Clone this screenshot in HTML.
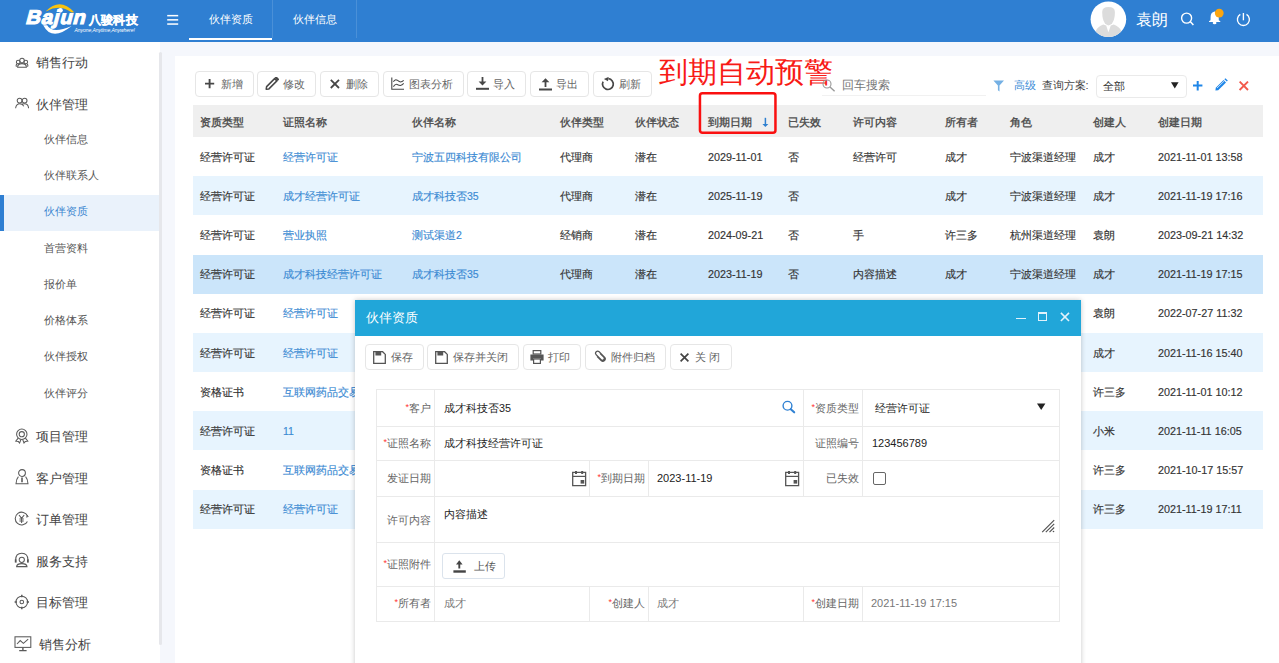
<!DOCTYPE html><html><head><meta charset="utf-8"><style>
*{margin:0;padding:0;box-sizing:border-box}
html,body{width:1279px;height:663px;overflow:hidden;background:#f5f7fc;font-family:"Liberation Sans",sans-serif;color:#333}
.a{position:absolute;white-space:nowrap}
#hdr{position:absolute;left:0;top:0;width:1279px;height:42px;background:#2f7fd2}
#side{position:absolute;left:0;top:42px;width:160px;height:621px;background:#fff}
#sb{position:absolute;left:158.5px;top:52px;width:3.5px;height:593px;background:#e6e7eb;border-radius:2px}
#panel{position:absolute;left:175px;top:56px;width:1104px;height:607px;background:#fff}
.btn{position:absolute;top:71px;height:26px;border:1px solid #e6e6e6;border-radius:4px;background:#fff;font-size:11px;color:#555}
.btn span{position:absolute;top:0;line-height:24px}
.btn svg{position:absolute}
.th{position:absolute;left:193px;top:105px;width:1070px;height:32px;background:#efefef}
.thc{position:absolute;top:1px;line-height:32px;font-size:10.5px;font-weight:bold;color:#555;white-space:nowrap}
.row{position:absolute;left:193px;width:1070px;height:39px}
.row.s{background:#e7f4fe}
.row.sel{background:#cbe5fa}
.c{position:absolute;top:0.5px;line-height:39px;font-size:10.5px;color:#333;white-space:nowrap;-webkit-text-stroke:0.15px currentColor}
.l{color:#3b8ad3}
.nav1{position:absolute;left:36px;font-size:13px;color:#444;line-height:20px;white-space:nowrap}
.nav2{position:absolute;left:43.5px;font-size:11px;color:#555;line-height:20px;white-space:nowrap}
.ico{position:absolute}
</style></head><body>
<div id="hdr"></div>
<svg class="ico" style="left:167px;top:14px" width="12" height="12" viewBox="0 0 12 12"><rect x="0.2" y="0.9" width="11" height="1.5" fill="#fff"/><rect x="0.2" y="5.1" width="11" height="1.5" fill="#fff"/><rect x="0.2" y="9.3" width="11" height="1.5" fill="#fff"/></svg>
<svg class="ico" style="left:24px;top:0" width="120" height="40" viewBox="0 0 120 40"><path d="M21.8 11.2Q36 -3.3 50.2 12.2L47.6 12.6Q36 3.85 22.4 11.3Z" fill="#f9c20f"/><path d="M19.2 25.2Q28 42 47.6 26.1Q28 34.3 23.2 25.2Z" fill="#fff"/><circle cx="36.4" cy="10.3" r="2.4" fill="#fff"/></svg>
<div class="a" style="left:25px;top:4px;font-size:20px;font-weight:bold;color:#fff;line-height:26px;-webkit-text-stroke:1.1px #fff;letter-spacing:0.7px;transform:skewX(-15deg) scaleX(1.02);transform-origin:0 20px">Bajun</div>
<div class="a" style="left:88.5px;top:10.5px;font-size:11.6px;font-weight:bold;color:#fff;line-height:18px;letter-spacing:0.4px;-webkit-text-stroke:0.3px #fff">八骏科技</div>
<div class="a" style="left:74.5px;top:27px;font-size:5px;color:#fff;line-height:6px;font-style:italic;letter-spacing:-0.05px">Anyone,Anytime,Anywhere!</div>
<svg class="ico" style="left:1090px;top:1px" width="37" height="37" viewBox="0 0 37 37"><defs><clipPath id="cc"><circle cx="18.4" cy="18.2" r="17.8"/></clipPath></defs><circle cx="18.4" cy="18.2" r="17.8" fill="#fff"/><g clip-path="url(#cc)" fill="#dcdcdc"><path d="M12.2 11Q12.2 5.9 18.5 5.9Q24.9 5.9 24.9 11Q24.9 18.5 22 22.6Q20.2 24.4 18.5 24.4Q16.8 24.4 15 22.6Q12.2 18.5 12.2 11Z"/><path d="M13.2 23.6L16.2 24.4L18.4 31.2L20.8 24.4L23.8 23.6Q29.5 26.2 31 29.5V37H6V29.5Q7.5 26.2 13.2 23.6Z"/></g></svg>
<div class="a" style="left:1136px;top:8px;font-size:16.3px;color:#fff;line-height:22px">袁朗</div>
<svg class="ico" style="left:1179px;top:11px" width="16" height="16" viewBox="0 0 16 16"><circle cx="7.6" cy="7.1" r="5" fill="none" stroke="#fff" stroke-width="1.4"/><path d="M11.2 10.6L14.4 14" stroke="#fff" stroke-width="1.5"/></svg>
<svg class="ico" style="left:1207px;top:8px" width="18" height="18" viewBox="0 0 18 18"><path d="M7.5 3.4Q3.6 4.2 3.6 9L3.5 12.3L2 13.2V14H13.3V13.2L11.8 12.3L11.7 9Q11.7 4.2 7.6 3.4Z" fill="#fff"/><ellipse cx="7.6" cy="15" rx="1.9" ry="1.2" fill="#fff"/><circle cx="12.25" cy="5.1" r="4.4" fill="#fba50e"/></svg>
<svg class="ico" style="left:1235px;top:11px" width="17" height="17" viewBox="0 0 17 17"><path d="M5.3 3.4A6 6 0 1 0 11.5 3.4" fill="none" stroke="#fff" stroke-width="1.35"/><path d="M8.4 2V9.3" stroke="#fff" stroke-width="1.35"/></svg>
<div class="a" style="left:208.5px;top:10.3px;font-size:10.6px;color:#fff;line-height:19px">伙伴资质</div>
<div class="a" style="left:188.5px;top:38.4px;width:83.5px;height:2px;background:#fff"></div>
<div class="a" style="left:272px;top:0;width:1px;height:38px;background:#4a90d8"></div>
<div class="a" style="left:292.5px;top:10.3px;font-size:10.6px;color:#fff;line-height:19px">伙伴信息</div>
<div class="a" style="left:356px;top:0;width:1px;height:38px;background:#4a90d8"></div>
<div id="side"></div><div id="sb"></div>
<div class="nav1" style="top:53px">销售行动</div>
<div class="nav1" style="top:95px">伙伴管理</div>
<div class="nav2" style="top:128.6px">伙伴信息</div>
<div class="nav2" style="top:164.9px">伙伴联系人</div>
<div class="a" style="left:0;top:195px;width:159px;height:36px;background:#eaf2fb"></div>
<div class="a" style="left:0;top:195px;width:4px;height:36px;background:#2f7fd2"></div>
<div class="nav2" style="top:201.2px;color:#3b86d0">伙伴资质</div>
<div class="nav2" style="top:237.5px">首营资料</div>
<div class="nav2" style="top:273.8px">报价单</div>
<div class="nav2" style="top:310.1px">价格体系</div>
<div class="nav2" style="top:346.4px">伙伴授权</div>
<div class="nav2" style="top:382.7px">伙伴评分</div>
<div class="nav1" style="top:427.3px;left:36px">项目管理</div>
<div class="nav1" style="top:468.5px;left:36px">客户管理</div>
<div class="nav1" style="top:510px;left:36px">订单管理</div>
<div class="nav1" style="top:551.7px;left:36px">服务支持</div>
<div class="nav1" style="top:593.3px;left:36px">目标管理</div>
<div class="nav1" style="top:635px;left:38.5px">销售分析</div>
<svg class="ico" style="left:15px;top:57px" width="14" height="12" viewBox="0 0 14 12" fill="none" stroke="#5a5a5a" stroke-width="1.05"><circle cx="7" cy="3.6" r="2.3"/><circle cx="3.2" cy="5" r="1.8"/><circle cx="10.8" cy="5" r="1.8"/><path d="M2.6 10.2Q2.6 6.6 7 6.6Q11.4 6.6 11.4 10.2Z"/><path d="M1.5 9.8Q0.6 8.2 1.9 7M12.5 9.8Q13.4 8.2 12.1 7"/></svg>
<svg class="ico" style="left:15px;top:97px" width="14" height="12" viewBox="0 0 14 12" fill="none" stroke="#5a5a5a" stroke-width="1.05"><circle cx="4.6" cy="3.6" r="2.4"/><circle cx="9.6" cy="3.6" r="2.4"/><path d="M0.6 11.2Q1.2 6.8 5 6.8Q7.4 6.8 8.8 9.2M5.4 7.2Q6.6 6.8 9.6 6.8Q13.2 6.8 13.6 11.2"/></svg>
<svg class="ico" style="left:14px;top:428px" width="16" height="16" viewBox="0 0 16 16" fill="none" stroke="#5a5a5a" stroke-width="1.05"><circle cx="7.8" cy="6.2" r="5.2"/><circle cx="7.8" cy="6.2" r="2.6"/><path d="M4.2 10.2L1.8 13.2L4.4 13.6L5.6 15L7 11.4M11.4 10.2L13.8 13.2L11.2 13.6L10 15L8.6 11.4"/></svg>
<svg class="ico" style="left:14px;top:468px" width="16" height="17" viewBox="0 0 16 17" fill="none" stroke="#5a5a5a" stroke-width="1.05"><circle cx="8" cy="5" r="3.4"/><path d="M4.4 8.6Q2.2 11 2 15.8H14Q13.8 11 11.6 8.6"/><path d="M8 9.6V14.2" stroke-width="1.6"/></svg>
<svg class="ico" style="left:14px;top:511px" width="16" height="15" viewBox="0 0 16 15" fill="none" stroke="#5a5a5a" stroke-width="1.05"><path d="M13.6 5.2A6.4 6.4 0 1 0 13.4 10.4"/><path d="M12.6 3.6L14.2 5.6L12 6" stroke-width="1"/><path d="M5 4L7.6 7.4L10.2 4M7.6 7.4V12M5.4 8H9.8M5.4 10H9.8"/></svg>
<svg class="ico" style="left:14px;top:552px" width="16" height="16" viewBox="0 0 16 16" fill="none" stroke="#5a5a5a" stroke-width="1.05"><path d="M1.6 8.2Q1.6 1.2 7.8 1.2Q14 1.2 14 8.2"/><rect x="0.8" y="7.4" width="1.8" height="3.2" fill="#555" stroke="none"/><rect x="13" y="7.4" width="1.8" height="3.2" fill="#555" stroke="none"/><circle cx="7.8" cy="7.8" r="2.6"/><path d="M2.6 14.6Q2.8 11.6 7.8 11.6Q12.8 11.6 13 14.6Z"/></svg>
<svg class="ico" style="left:14px;top:594px" width="16" height="16" viewBox="0 0 16 16" fill="none" stroke="#5a5a5a" stroke-width="1.05"><circle cx="7.8" cy="8" r="5.8"/><circle cx="7.8" cy="8" r="1.8"/><path d="M7.8 0.8V3.2M7.8 12.8V15.2M0.6 8H3M12.6 8H15" stroke-width="1.5"/></svg>
<svg class="ico" style="left:14px;top:636px" width="18" height="16" viewBox="0 0 18 16" fill="none" stroke="#5a5a5a" stroke-width="1.05"><rect x="1" y="0.8" width="15.8" height="10.6"/><path d="M3 8L6.2 4.6L9.4 7.4L14.2 3.2"/><path d="M8.9 11.4V14.4M5.2 14.6H12.6" stroke-width="1.4"/></svg>
<div id="panel"></div>
<div class="btn" style="left:195px;width:59px"></div>
<div class="btn" style="left:257px;width:59px"></div>
<div class="btn" style="left:320px;width:59px"></div>
<div class="btn" style="left:383px;width:81px"></div>
<div class="btn" style="left:467px;width:59px"></div>
<div class="btn" style="left:530px;width:59px"></div>
<div class="btn" style="left:593px;width:59px"></div>
<svg class="ico" style="left:205px;top:79px" width="10" height="10" viewBox="0 0 10 10"><path d="M0 4.6H9.2M4.6 0V9.2" stroke="#474747" stroke-width="1.9"/></svg>
<svg class="ico" style="left:265px;top:77px" width="14" height="13" viewBox="0 0 14 13"><path d="M1.2 12.2L1.6 9.6L9.6 1.6L11.9 3.9L3.9 11.9Z" fill="none" stroke="#474747" stroke-width="1.5" stroke-linejoin="round"/><path d="M10.4 0.8L11.2 0L13.5 2.3L12.7 3.1Z" fill="#474747" stroke="#474747" stroke-width="1.2"/></svg>
<svg class="ico" style="left:330px;top:79px" width="10" height="10" viewBox="0 0 10 10"><path d="M0.8 0.8L9 9M9 0.8L0.8 9" stroke="#474747" stroke-width="1.8"/></svg>
<svg class="ico" style="left:391px;top:77px" width="14" height="14" viewBox="0 0 14 14"><path d="M0.8 0.5V12.3H13" fill="none" stroke="#474747" stroke-width="1.1"/><path d="M2.4 4.8Q4.2 1.8 6.2 3.2Q8 4.6 9.4 4.9Q11.2 4.8 12.7 3.4M2.4 9.6Q4.2 6.8 6.2 7.4Q8 8.2 9.4 8.4Q11.2 8.2 12.7 6.4" fill="none" stroke="#474747" stroke-width="1.05"/></svg>
<svg class="ico" style="left:476px;top:77px" width="13" height="13" viewBox="0 0 13 13"><path d="M6.5 0V7" stroke="#474747" stroke-width="1.8"/><path d="M2.6 4.6L6.5 8.4L10.4 4.6Z" fill="#474747"/><rect x="0" y="10.8" width="13" height="2" fill="#474747"/></svg>
<svg class="ico" style="left:538.5px;top:77.5px" width="13" height="13" viewBox="0 0 13 13"><path d="M6.5 3V9" stroke="#474747" stroke-width="1.8"/><path d="M2.6 4.2L6.5 0.2L10.4 4.2Z" fill="#474747"/><rect x="0" y="10.5" width="13" height="2" fill="#474747"/></svg>
<svg class="ico" style="left:600.5px;top:77px" width="14" height="14" viewBox="0 0 14 14"><path d="M2.1 4.6A5.4 5.4 0 1 0 7.4 1.7" fill="none" stroke="#474747" stroke-width="1.7"/><path d="M2.9 1.9L7.6 -0.1L7 4.3Z" fill="#474747"/></svg>
<div class="a" style="left:220.5px;color:#666;font-size:10.8px;line-height:20px;top:74px">新增</div>
<div class="a" style="left:283px;color:#666;font-size:10.8px;line-height:20px;top:74px">修改</div>
<div class="a" style="left:346px;color:#666;font-size:10.8px;line-height:20px;top:74px">删除</div>
<div class="a" style="left:409px;color:#666;font-size:10.8px;line-height:20px;top:74px">图表分析</div>
<div class="a" style="left:493px;color:#666;font-size:10.8px;line-height:20px;top:74px">导入</div>
<div class="a" style="left:556px;color:#666;font-size:10.8px;line-height:20px;top:74px">导出</div>
<div class="a" style="left:618.5px;color:#666;font-size:10.8px;line-height:20px;top:74px">刷新</div>
<div class="a" style="left:659px;top:53.5px;font-size:29.3px;color:#f81a16;line-height:36px">到期自动预警</div>
<svg class="ico" style="left:822px;top:79px" width="14" height="13" viewBox="0 0 14 13" fill="none" stroke="#999" stroke-width="1.1"><circle cx="5" cy="5" r="4"/><path d="M8 8L12.6 12.2" stroke-width="1.4"/></svg>
<div class="a" style="left:841.5px;top:75px;font-size:12px;color:#777;line-height:20px">回车搜索</div>
<div class="a" style="left:822px;top:95px;width:164px;height:1px;background:#f1f1f1"></div>
<svg class="ico" style="left:993px;top:79.5px" width="13" height="13" viewBox="0 0 13 13"><path d="M0.4 0.4H11L6.5 5.6V11.4L4.9 10.2V5.6Z" fill="#74b0e4"/></svg>
<div class="a" style="left:1014px;top:75px;font-size:11px;color:#3a8ad6;line-height:20px">高级</div>
<div class="a" style="left:1041.5px;top:75px;font-size:11px;color:#444;line-height:20px">查询方案:</div>
<div class="a" style="left:1096px;top:75px;width:91px;height:23px;border:1px solid #eaeaea;border-radius:4px;background:#fff"></div>
<div class="a" style="left:1102.5px;top:76px;font-size:11px;color:#333;line-height:20px">全部</div>
<svg class="ico" style="left:1171px;top:82px" width="8" height="7" viewBox="0 0 8 7"><path d="M0 0.3H7.6L3.8 6.5Z" fill="#222"/></svg>
<svg class="ico" style="left:1193px;top:81px" width="10" height="10" viewBox="0 0 10 10"><path d="M0 4.6H9.4M4.7 0V9.4" stroke="#1f86e8" stroke-width="2"/></svg>
<svg class="ico" style="left:1213.5px;top:78px" width="14" height="14" viewBox="0 0 14 14"><path d="M1.4 12.6L1.8 9.8L9.6 2L12 4.4L4.2 12.2Z" fill="#1f86e8"/><path d="M3 10L10.4 2.8" stroke="#fff" stroke-width="0.7"/><path d="M10.4 1.2L11.4 0.2L13.8 2.6L12.8 3.6Z" fill="#1f86e8"/></svg>
<svg class="ico" style="left:1238.5px;top:81px" width="10" height="10" viewBox="0 0 10 10"><path d="M0.6 0.6L9 9M9 0.6L0.6 9" stroke="#f25a4c" stroke-width="1.9"/></svg>
<div class="th">
<div class="thc" style="left:6.5px">资质类型</div>
<div class="thc" style="left:90px">证照名称</div>
<div class="thc" style="left:219px">伙伴名称</div>
<div class="thc" style="left:367px">伙伴类型</div>
<div class="thc" style="left:441.5px">伙伴状态</div>
<div class="thc" style="left:515px">到期日期</div>
<div class="thc" style="left:595px">已失效</div>
<div class="thc" style="left:659.5px">许可内容</div>
<div class="thc" style="left:752px">所有者</div>
<div class="thc" style="left:816.5px">角色</div>
<div class="thc" style="left:900px">创建人</div>
<div class="thc" style="left:965px">创建日期</div>
</div>
<div class="row" style="top:137.0px">
<div class="c" style="left:6.5px">经营许可证</div>
<div class="c l" style="left:90px">经营许可证</div>
<div class="c l" style="left:219px">宁波五四科技有限公司</div>
<div class="c" style="left:367px">代理商</div>
<div class="c" style="left:441.5px">潜在</div>
<div class="c" style="left:515px;font-size:10.8px">2029-11-01</div>
<div class="c" style="left:595px">否</div>
<div class="c" style="left:659.5px">经营许可</div>
<div class="c" style="left:752px">成才</div>
<div class="c" style="left:816.5px">宁波渠道经理</div>
<div class="c" style="left:900px">成才</div>
<div class="c" style="left:965px;font-size:10.8px">2021-11-01 13:58</div>
</div>
<div class="row s" style="top:176.2px">
<div class="c" style="left:6.5px">经营许可证</div>
<div class="c l" style="left:90px">成才经营许可证</div>
<div class="c l" style="left:219px">成才科技否35</div>
<div class="c" style="left:367px">代理商</div>
<div class="c" style="left:441.5px">潜在</div>
<div class="c" style="left:515px;font-size:10.8px">2025-11-19</div>
<div class="c" style="left:595px">否</div>
<div class="c" style="left:752px">成才</div>
<div class="c" style="left:816.5px">宁波渠道经理</div>
<div class="c" style="left:900px">成才</div>
<div class="c" style="left:965px;font-size:10.8px">2021-11-19 17:16</div>
</div>
<div class="row" style="top:215.4px">
<div class="c" style="left:6.5px">经营许可证</div>
<div class="c l" style="left:90px">营业执照</div>
<div class="c l" style="left:219px">测试渠道2</div>
<div class="c" style="left:367px">经销商</div>
<div class="c" style="left:441.5px">潜在</div>
<div class="c" style="left:515px;font-size:10.8px">2024-09-21</div>
<div class="c" style="left:595px">否</div>
<div class="c" style="left:659.5px">手</div>
<div class="c" style="left:752px">许三多</div>
<div class="c" style="left:816.5px">杭州渠道经理</div>
<div class="c" style="left:900px">袁朗</div>
<div class="c" style="left:965px;font-size:10.8px">2023-09-21 14:32</div>
</div>
<div class="row sel" style="top:254.6px">
<div class="c" style="left:6.5px">经营许可证</div>
<div class="c l" style="left:90px">成才科技经营许可证</div>
<div class="c l" style="left:219px">成才科技否35</div>
<div class="c" style="left:367px">代理商</div>
<div class="c" style="left:441.5px">潜在</div>
<div class="c" style="left:515px;font-size:10.8px">2023-11-19</div>
<div class="c" style="left:595px">否</div>
<div class="c" style="left:659.5px">内容描述</div>
<div class="c" style="left:752px">成才</div>
<div class="c" style="left:816.5px">宁波渠道经理</div>
<div class="c" style="left:900px">成才</div>
<div class="c" style="left:965px;font-size:10.8px">2021-11-19 17:15</div>
</div>
<div class="row" style="top:293.8px">
<div class="c" style="left:6.5px">经营许可证</div>
<div class="c l" style="left:90px">经营许可证</div>
<div class="c" style="left:900px">袁朗</div>
<div class="c" style="left:965px;font-size:10.8px">2022-07-27 11:32</div>
</div>
<div class="row s" style="top:333.0px">
<div class="c" style="left:6.5px">经营许可证</div>
<div class="c l" style="left:90px">经营许可证</div>
<div class="c" style="left:900px">成才</div>
<div class="c" style="left:965px;font-size:10.8px">2021-11-16 15:40</div>
</div>
<div class="row" style="top:372.2px">
<div class="c" style="left:6.5px">资格证书</div>
<div class="c l" style="left:90px">互联网药品交易服务</div>
<div class="c" style="left:900px">许三多</div>
<div class="c" style="left:965px;font-size:10.8px">2021-11-01 10:12</div>
</div>
<div class="row s" style="top:411.4px">
<div class="c" style="left:6.5px">经营许可证</div>
<div class="c l" style="left:90px">11</div>
<div class="c" style="left:900px">小米</div>
<div class="c" style="left:965px;font-size:10.8px">2021-11-11 16:05</div>
</div>
<div class="row" style="top:450.6px">
<div class="c" style="left:6.5px">资格证书</div>
<div class="c l" style="left:90px">互联网药品交易服务</div>
<div class="c" style="left:900px">许三多</div>
<div class="c" style="left:965px;font-size:10.8px">2021-10-17 15:57</div>
</div>
<div class="row s" style="top:489.8px">
<div class="c" style="left:6.5px">经营许可证</div>
<div class="c l" style="left:90px">经营许可证</div>
<div class="c" style="left:900px">许三多</div>
<div class="c" style="left:965px;font-size:10.8px">2021-11-19 17:11</div>
</div>
<svg class="ico" style="left:761.5px;top:117px" width="7" height="10" viewBox="0 0 7 10"><path d="M3.4 0.8V7" stroke="#2f80d0" stroke-width="1.5"/><path d="M0.4 7H6.4L3.4 10Z" fill="#2f80d0"/></svg>
<svg class="ico" style="left:697px;top:90px" width="81" height="46" viewBox="0 0 81 46"><rect x="2.95" y="3.25" width="75.5" height="39.5" rx="2.5" fill="none" stroke="#fa1010" stroke-width="2.5"/></svg>
<div class="a" style="left:355px;top:300px;width:726px;height:370px;background:#fff;box-shadow:0 0 5px rgba(0,0,0,0.22)"></div>
<div class="a" style="left:355px;top:300px;width:726px;height:36px;background:#21a6d9"></div>
<div class="a" style="left:366px;top:308px;font-size:13px;color:#fff;line-height:20px">伙伴资质</div>
<div class="a" style="left:1016px;top:317.5px;width:9.5px;height:1.8px;background:#e2f2fb"></div>
<div class="a" style="left:1038px;top:312.2px;width:9px;height:9px;border:1.3px solid #e2f2fb;border-top-width:2.6px"></div>
<svg class="ico" style="left:1059.5px;top:312px" width="10" height="10" viewBox="0 0 10 10"><path d="M0.9 0.9L9 9M9 0.9L0.9 9" stroke="#e2f2fb" stroke-width="1.6"/></svg>
<div class="btn" style="left:364.5px;top:343.5px;height:26.5px;width:59px"></div>
<div class="btn" style="left:427px;top:343.5px;height:26.5px;width:91.5px"></div>
<div class="btn" style="left:522.5px;top:343.5px;height:26.5px;width:58.5px"></div>
<div class="btn" style="left:585px;top:343.5px;height:26.5px;width:80.5px"></div>
<div class="btn" style="left:669.5px;top:343.5px;height:26.5px;width:62px"></div>
<div class="a" style="left:390.8px;top:347px;color:#666;font-size:10.8px;line-height:20px">保存</div>
<div class="a" style="left:453.4px;top:347px;color:#666;font-size:10.8px;line-height:20px">保存并关闭</div>
<div class="a" style="left:548.4px;top:347px;color:#666;font-size:10.8px;line-height:20px">打印</div>
<div class="a" style="left:610.8px;top:347px;color:#666;font-size:10.8px;line-height:20px">附件归档</div>
<div class="a" style="left:695.4px;top:347px;color:#666;font-size:10.8px;line-height:20px">关 闭</div>
<svg class="ico" style="left:373px;top:350.5px" width="13" height="13" viewBox="0 0 13 13"><path d="M0.7 0.7H9.6L12.3 3.4V12.3H0.7Z" fill="none" stroke="#555" stroke-width="1.3"/><rect x="2.4" y="0.7" width="5.8" height="3.8" fill="#555"/></svg>
<svg class="ico" style="left:435.2px;top:350.5px" width="13" height="13" viewBox="0 0 13 13"><path d="M0.7 0.7H9.6L12.3 3.4V12.3H0.7Z" fill="none" stroke="#555" stroke-width="1.3"/><rect x="2.4" y="0.7" width="5.8" height="3.8" fill="#555"/></svg>
<svg class="ico" style="left:530px;top:350px" width="14" height="14" viewBox="0 0 14 14"><rect x="3.2" y="0.6" width="7.6" height="3.4" fill="none" stroke="#555" stroke-width="1.2"/><path d="M0.4 4.4H13.6V10.4H11V8.4H3V10.4H0.4Z" fill="#555"/><rect x="3.6" y="9" width="6.8" height="4.4" fill="none" stroke="#555" stroke-width="1.2"/></svg>
<svg class="ico" style="left:592.5px;top:349px" width="15" height="15" viewBox="0 0 15 15"><g transform="rotate(-45 7.5 7.5)"><path d="M9.3 5.2V10.6A1.8 1.8 0 0 1 5.7 10.6V3.6A2.1 2.1 0 0 1 9.9 3.6V11.2A2.4 2.4 0 0 1 5.1 11.2V5.2" fill="none" stroke="#555" stroke-width="1.15" transform="translate(0 -0.4)"/></g></svg>
<svg class="ico" style="left:680px;top:353px" width="9" height="9" viewBox="0 0 9 9"><path d="M0.6 0.6L8.4 8.4M8.4 0.6L0.6 8.4" stroke="#444" stroke-width="1.7"/></svg>
<div class="a" style="left:376px;top:389px;width:684px;height:1px;background:#eaeaea"></div>
<div class="a" style="left:376px;top:426px;width:684px;height:1px;background:#eaeaea"></div>
<div class="a" style="left:376px;top:460px;width:684px;height:1px;background:#eaeaea"></div>
<div class="a" style="left:376px;top:496px;width:684px;height:1px;background:#eaeaea"></div>
<div class="a" style="left:376px;top:542px;width:684px;height:1px;background:#eaeaea"></div>
<div class="a" style="left:376px;top:586px;width:684px;height:1px;background:#eaeaea"></div>
<div class="a" style="left:376px;top:621px;width:684px;height:1px;background:#eaeaea"></div>
<div class="a" style="left:376px;top:389px;width:1px;height:233px;background:#eaeaea"></div>
<div class="a" style="left:1059px;top:389px;width:1px;height:233px;background:#eaeaea"></div>
<div class="a" style="left:434px;top:389px;width:1px;height:233px;background:#eaeaea"></div>
<div class="a" style="left:803px;top:389px;width:1px;height:107px;background:#eaeaea"></div>
<div class="a" style="left:862px;top:389px;width:1px;height:107px;background:#eaeaea"></div>
<div class="a" style="left:803px;top:586px;width:1px;height:36px;background:#eaeaea"></div>
<div class="a" style="left:862px;top:586px;width:1px;height:36px;background:#eaeaea"></div>
<div class="a" style="left:589px;top:460px;width:1px;height:36px;background:#eaeaea"></div>
<div class="a" style="left:648px;top:460px;width:1px;height:36px;background:#eaeaea"></div>
<div class="a" style="left:589px;top:586px;width:1px;height:36px;background:#eaeaea"></div>
<div class="a" style="left:648px;top:586px;width:1px;height:36px;background:#eaeaea"></div>
<div class="a" style="left:331px;width:100px;text-align:right;top:398px;line-height:20px;font-size:10.8px;color:#666"><span style="color:#f33;font-size:9px;position:relative;top:-2px">*</span>客户</div>
<div class="a" style="left:444px;top:398px;line-height:20px;font-size:10.8px;color:#222">成才科技否35</div>
<div class="a" style="left:331px;width:100px;text-align:right;top:433px;line-height:20px;font-size:10.8px;color:#666"><span style="color:#f33;font-size:9px;position:relative;top:-2px">*</span>证照名称</div>
<div class="a" style="left:444px;top:433px;line-height:20px;font-size:10.8px;color:#222">成才科技经营许可证</div>
<div class="a" style="left:331px;width:100px;text-align:right;top:468px;line-height:20px;font-size:10.8px;color:#666">发证日期</div>
<div class="a" style="left:545px;width:100px;text-align:right;top:468px;line-height:20px;font-size:10.8px;color:#666"><span style="color:#f33;font-size:9px;position:relative;top:-2px">*</span>到期日期</div>
<div class="a" style="left:657px;top:468px;line-height:20px;font-size:11px;color:#222">2023-11-19</div>
<div class="a" style="left:759px;width:100px;text-align:right;top:398px;line-height:20px;font-size:10.8px;color:#666"><span style="color:#f33;font-size:9px;position:relative;top:-2px">*</span>资质类型</div>
<div class="a" style="left:875px;top:398px;line-height:20px;font-size:10.8px;color:#222">经营许可证</div>
<div class="a" style="left:759px;width:100px;text-align:right;top:433px;line-height:20px;font-size:10.8px;color:#666">证照编号</div>
<div class="a" style="left:872px;top:433px;line-height:20px;font-size:11px;color:#222">123456789</div>
<div class="a" style="left:759px;width:100px;text-align:right;top:468px;line-height:20px;font-size:10.8px;color:#666">已失效</div>
<div class="a" style="left:331px;width:100px;text-align:right;top:510px;line-height:20px;font-size:10.8px;color:#666">许可内容</div>
<div class="a" style="left:444px;top:504px;line-height:20px;font-size:10.8px;color:#222">内容描述</div>
<div class="a" style="left:331px;width:100px;text-align:right;top:554px;line-height:20px;font-size:10.8px;color:#666"><span style="color:#f33;font-size:9px;position:relative;top:-2px">*</span>证照附件</div>
<div class="a" style="left:331px;width:100px;text-align:right;top:593px;line-height:20px;font-size:10.8px;color:#666"><span style="color:#f33;font-size:9px;position:relative;top:-2px">*</span>所有者</div>
<div class="a" style="left:444px;top:593px;line-height:20px;font-size:10.8px;color:#777">成才</div>
<div class="a" style="left:545px;width:100px;text-align:right;top:593px;line-height:20px;font-size:10.8px;color:#666"><span style="color:#f33;font-size:9px;position:relative;top:-2px">*</span>创建人</div>
<div class="a" style="left:657px;top:593px;line-height:20px;font-size:10.8px;color:#777">成才</div>
<div class="a" style="left:759px;width:100px;text-align:right;top:593px;line-height:20px;font-size:10.8px;color:#666"><span style="color:#f33;font-size:9px;position:relative;top:-2px">*</span>创建日期</div>
<div class="a" style="left:871px;top:593px;line-height:20px;font-size:11px;color:#777">2021-11-19 17:15</div>
<div class="a" style="left:873px;top:472px;width:13px;height:13px;border:1.5px solid #666;border-radius:2px"></div>
<div class="a" style="left:442px;top:553px;width:63px;height:26px;border:1px solid #dbe3ec;border-radius:3px;background:#fff"></div>
<div class="a" style="left:474px;top:556px;line-height:20px;font-size:10.8px;color:#555">上传</div>
<svg class="ico" style="left:571.8px;top:471px" width="15" height="16" viewBox="0 0 15 16"><path d="M0.7 1.4H13.6V14.6H0.7Z" fill="none" stroke="#555" stroke-width="1.3"/><path d="M0.7 5.4H13.6" stroke="#555" stroke-width="1.2"/><rect x="3" y="0" width="2" height="3" fill="#555"/><rect x="9.2" y="0" width="2" height="3" fill="#555"/><rect x="8.6" y="9" width="3.6" height="3.6" fill="#555"/></svg>
<svg class="ico" style="left:785px;top:471px" width="15" height="16" viewBox="0 0 15 16"><path d="M0.7 1.4H13.6V14.6H0.7Z" fill="none" stroke="#555" stroke-width="1.3"/><path d="M0.7 5.4H13.6" stroke="#555" stroke-width="1.2"/><rect x="3" y="0" width="2" height="3" fill="#555"/><rect x="9.2" y="0" width="2" height="3" fill="#555"/><rect x="8.6" y="9" width="3.6" height="3.6" fill="#555"/></svg>
<svg class="ico" style="left:781px;top:399px" width="15" height="15" viewBox="0 0 15 15"><circle cx="6.5" cy="6.75" r="4.4" fill="none" stroke="#3182d3" stroke-width="1.4"/><path d="M9.8 10.2L13.2 13.3" stroke="#3182d3" stroke-width="2.1" stroke-linecap="round"/></svg>
<svg class="ico" style="left:1036.5px;top:403px" width="9" height="8" viewBox="0 0 9 8"><path d="M0 0.4H8.4L4.2 7Z" fill="#222"/></svg>
<svg class="ico" style="left:1040px;top:518px" width="16" height="16" viewBox="0 0 16 16" stroke="#555" stroke-width="1.2"><path d="M2.2 14.2L14.2 2.2M5.8 14.2L14.2 5.8M9.5 14.2L14.2 9.5"/><circle cx="13.5" cy="13.5" r="0.8" fill="#555" stroke="none"/></svg>
<svg class="ico" style="left:452.5px;top:560px" width="13" height="13" viewBox="0 0 13 13"><path d="M6.3 3.6V8.5" stroke="#444" stroke-width="1.9"/><path d="M3 4.4L6.3 0.2L9.6 4.4Z" fill="#444"/><rect x="0.4" y="10.3" width="12.4" height="2.4" fill="#444"/></svg>
</body></html>
